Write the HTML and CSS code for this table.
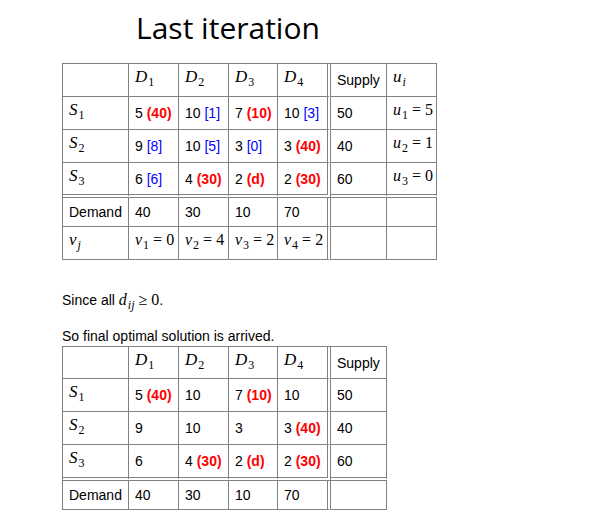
FILE: index.html
```html
<!DOCTYPE html>
<html>
<head>
<meta charset="utf-8">
<link rel="stylesheet" href="styles.css">
</head>
<body>
<div class="page">
  <h1 class="title">Last iteration</h1>

  <table class="grid t1">
    <colgroup>
      <col class="c1"><col class="c2"><col class="c3"><col class="c4"><col class="c5"><col class="c6"><col class="c7">
    </colgroup>
    <tr class="rh">
      <td></td>
      <td><span class="m"><i>D</i><sub>1</sub></span></td>
      <td><span class="m"><i>D</i><sub>2</sub></span></td>
      <td><span class="m"><i>D</i><sub>3</sub></span></td>
      <td class="dbl"><span class="m"><i>D</i><sub>4</sub></span></td>
      <td>Supply</td>
      <td><span class="m"><i>u</i><sub><i>i</i></sub></span></td>
    </tr>
    <tr class="rs">
      <td><span class="m"><i>S</i><sub>1</sub></span></td>
      <td>5 <span class="r">(40)</span></td>
      <td>10 <span class="b">[1]</span></td>
      <td>7 <span class="r">(10)</span></td>
      <td class="dbl">10 <span class="b">[3]</span></td>
      <td>50</td>
      <td><span class="m eq"><i>u</i><sub>1</sub> = 5</span></td>
    </tr>
    <tr class="rs">
      <td><span class="m"><i>S</i><sub>2</sub></span></td>
      <td>9 <span class="b">[8]</span></td>
      <td>10 <span class="b">[5]</span></td>
      <td>3 <span class="b">[0]</span></td>
      <td class="dbl">3 <span class="r">(40)</span></td>
      <td>40</td>
      <td><span class="m eq"><i>u</i><sub>2</sub> = 1</span></td>
    </tr>
    <tr class="rl">
      <td><span class="m"><i>S</i><sub>3</sub></span></td>
      <td>6 <span class="b">[6]</span></td>
      <td>4 <span class="r">(30)</span></td>
      <td>2 <span class="r">(d)</span></td>
      <td class="dbl">2 <span class="r">(30)</span></td>
      <td>60</td>
      <td><span class="m eq"><i>u</i><sub>3</sub> = 0</span></td>
    </tr>
    <tr class="rd">
      <td>Demand</td>
      <td>40</td>
      <td>30</td>
      <td>10</td>
      <td class="dbl">70</td>
      <td></td>
      <td></td>
    </tr>
    <tr class="rs">
      <td><span class="m"><i>v</i><sub><i>j</i></sub></span></td>
      <td><span class="m eq"><i>v</i><sub>1</sub> = 0</span></td>
      <td><span class="m eq"><i>v</i><sub>2</sub> = 4</span></td>
      <td><span class="m eq"><i>v</i><sub>3</sub> = 2</span></td>
      <td class="dbl"><span class="m eq"><i>v</i><sub>4</sub> = 2</span></td>
      <td></td>
      <td></td>
    </tr>
  </table>

  <p class="note first">Since all <span class="m"><i>d</i><sub><i>ij</i></sub> ≥ 0</span>.</p>
  <p class="note second">So final optimal solution is arrived.</p>

  <table class="grid t2">
    <colgroup>
      <col class="c1"><col class="c2"><col class="c3"><col class="c4"><col class="c5"><col class="c6">
    </colgroup>
    <tr class="rh2">
      <td></td>
      <td><span class="m"><i>D</i><sub>1</sub></span></td>
      <td><span class="m"><i>D</i><sub>2</sub></span></td>
      <td><span class="m"><i>D</i><sub>3</sub></span></td>
      <td class="dbl"><span class="m"><i>D</i><sub>4</sub></span></td>
      <td>Supply</td>
    </tr>
    <tr class="rs">
      <td><span class="m"><i>S</i><sub>1</sub></span></td>
      <td>5 <span class="r">(40)</span></td>
      <td>10</td>
      <td>7 <span class="r">(10)</span></td>
      <td class="dbl">10</td>
      <td>50</td>
    </tr>
    <tr class="rs">
      <td><span class="m"><i>S</i><sub>2</sub></span></td>
      <td>9</td>
      <td>10</td>
      <td>3</td>
      <td class="dbl">3 <span class="r">(40)</span></td>
      <td>40</td>
    </tr>
    <tr class="rl2">
      <td><span class="m"><i>S</i><sub>3</sub></span></td>
      <td>6</td>
      <td>4 <span class="r">(30)</span></td>
      <td>2 <span class="r">(d)</span></td>
      <td class="dbl">2 <span class="r">(30)</span></td>
      <td>60</td>
    </tr>
    <tr class="rd">
      <td>Demand</td>
      <td>40</td>
      <td>30</td>
      <td>10</td>
      <td class="dbl">70</td>
      <td></td>
    </tr>
  </table>
</div>
</body>
</html>
```

FILE: styles.css
```css
html, body {
  margin: 0;
  padding: 0;
  background: #ffffff;
}

.page {
  padding: 8px 0 0 62px;
  font-family: "Liberation Sans", Arial, sans-serif;
  font-size: 14px;
  color: #000000;
}

.title {
  margin: 0 0 15px 74px;
  font-family: "Open Sans", sans-serif;
  font-weight: normal;
  font-size: 30px;
  line-height: 40px;
  color: #000000;
}

.grid {
  border-collapse: separate;
  border-spacing: 0;
  table-layout: fixed;
  border-left: 1px solid #808080;
  border-top: 1px solid #808080;
}

.t1 { width: 375px; }
.t2 { width: 325px; }

.c1 { width: 66px; }
.c2 { width: 50px; }
.c3 { width: 50px; }
.c4 { width: 49px; }
.c5 { width: 53px; }
.c6 { width: 56px; }
.c7 { width: 50px; }

.grid td {
  border-right: 1px solid #808080;
  border-bottom: 1px solid #808080;
  padding: 0 0 0 6px;
  vertical-align: middle;
  white-space: nowrap;
  line-height: 16px;
}

.grid td.dbl {
  border-right: 4px double #808080;
}

.grid tr.rl td,
.grid tr.rl2 td {
  border-bottom: 4px double #808080;
}

.rh { height: 33px; }
.rh2 { height: 32px; }
.rs { height: 33px; }
.rl { height: 35px; }
.rl2 { height: 36px; }
.rd { height: 29px; }

.m {
  font-family: "Liberation Serif", "Times New Roman", serif;
  font-size: 17px;
  line-height: 0;
  vertical-align: 3px;
}

.m.eq {
  font-size: 16px;
}

.m i {
  font-style: italic;
}

.m sub {
  font-size: 12px;
  line-height: 0;
  vertical-align: -4px;
  font-style: normal;
  margin-left: 1px;
}

.m sub i {
  font-style: italic;
}

.r {
  color: #ff0000;
  font-weight: bold;
}

.b {
  color: #0000ff;
}

.note {
  margin: 0;
  line-height: 20px;
}

.note.first {
  margin-top: 30px;
}

.note.second {
  margin-top: 16px;
}

.note .m {
  font-size: 16px;
  vertical-align: 0;
}
```
